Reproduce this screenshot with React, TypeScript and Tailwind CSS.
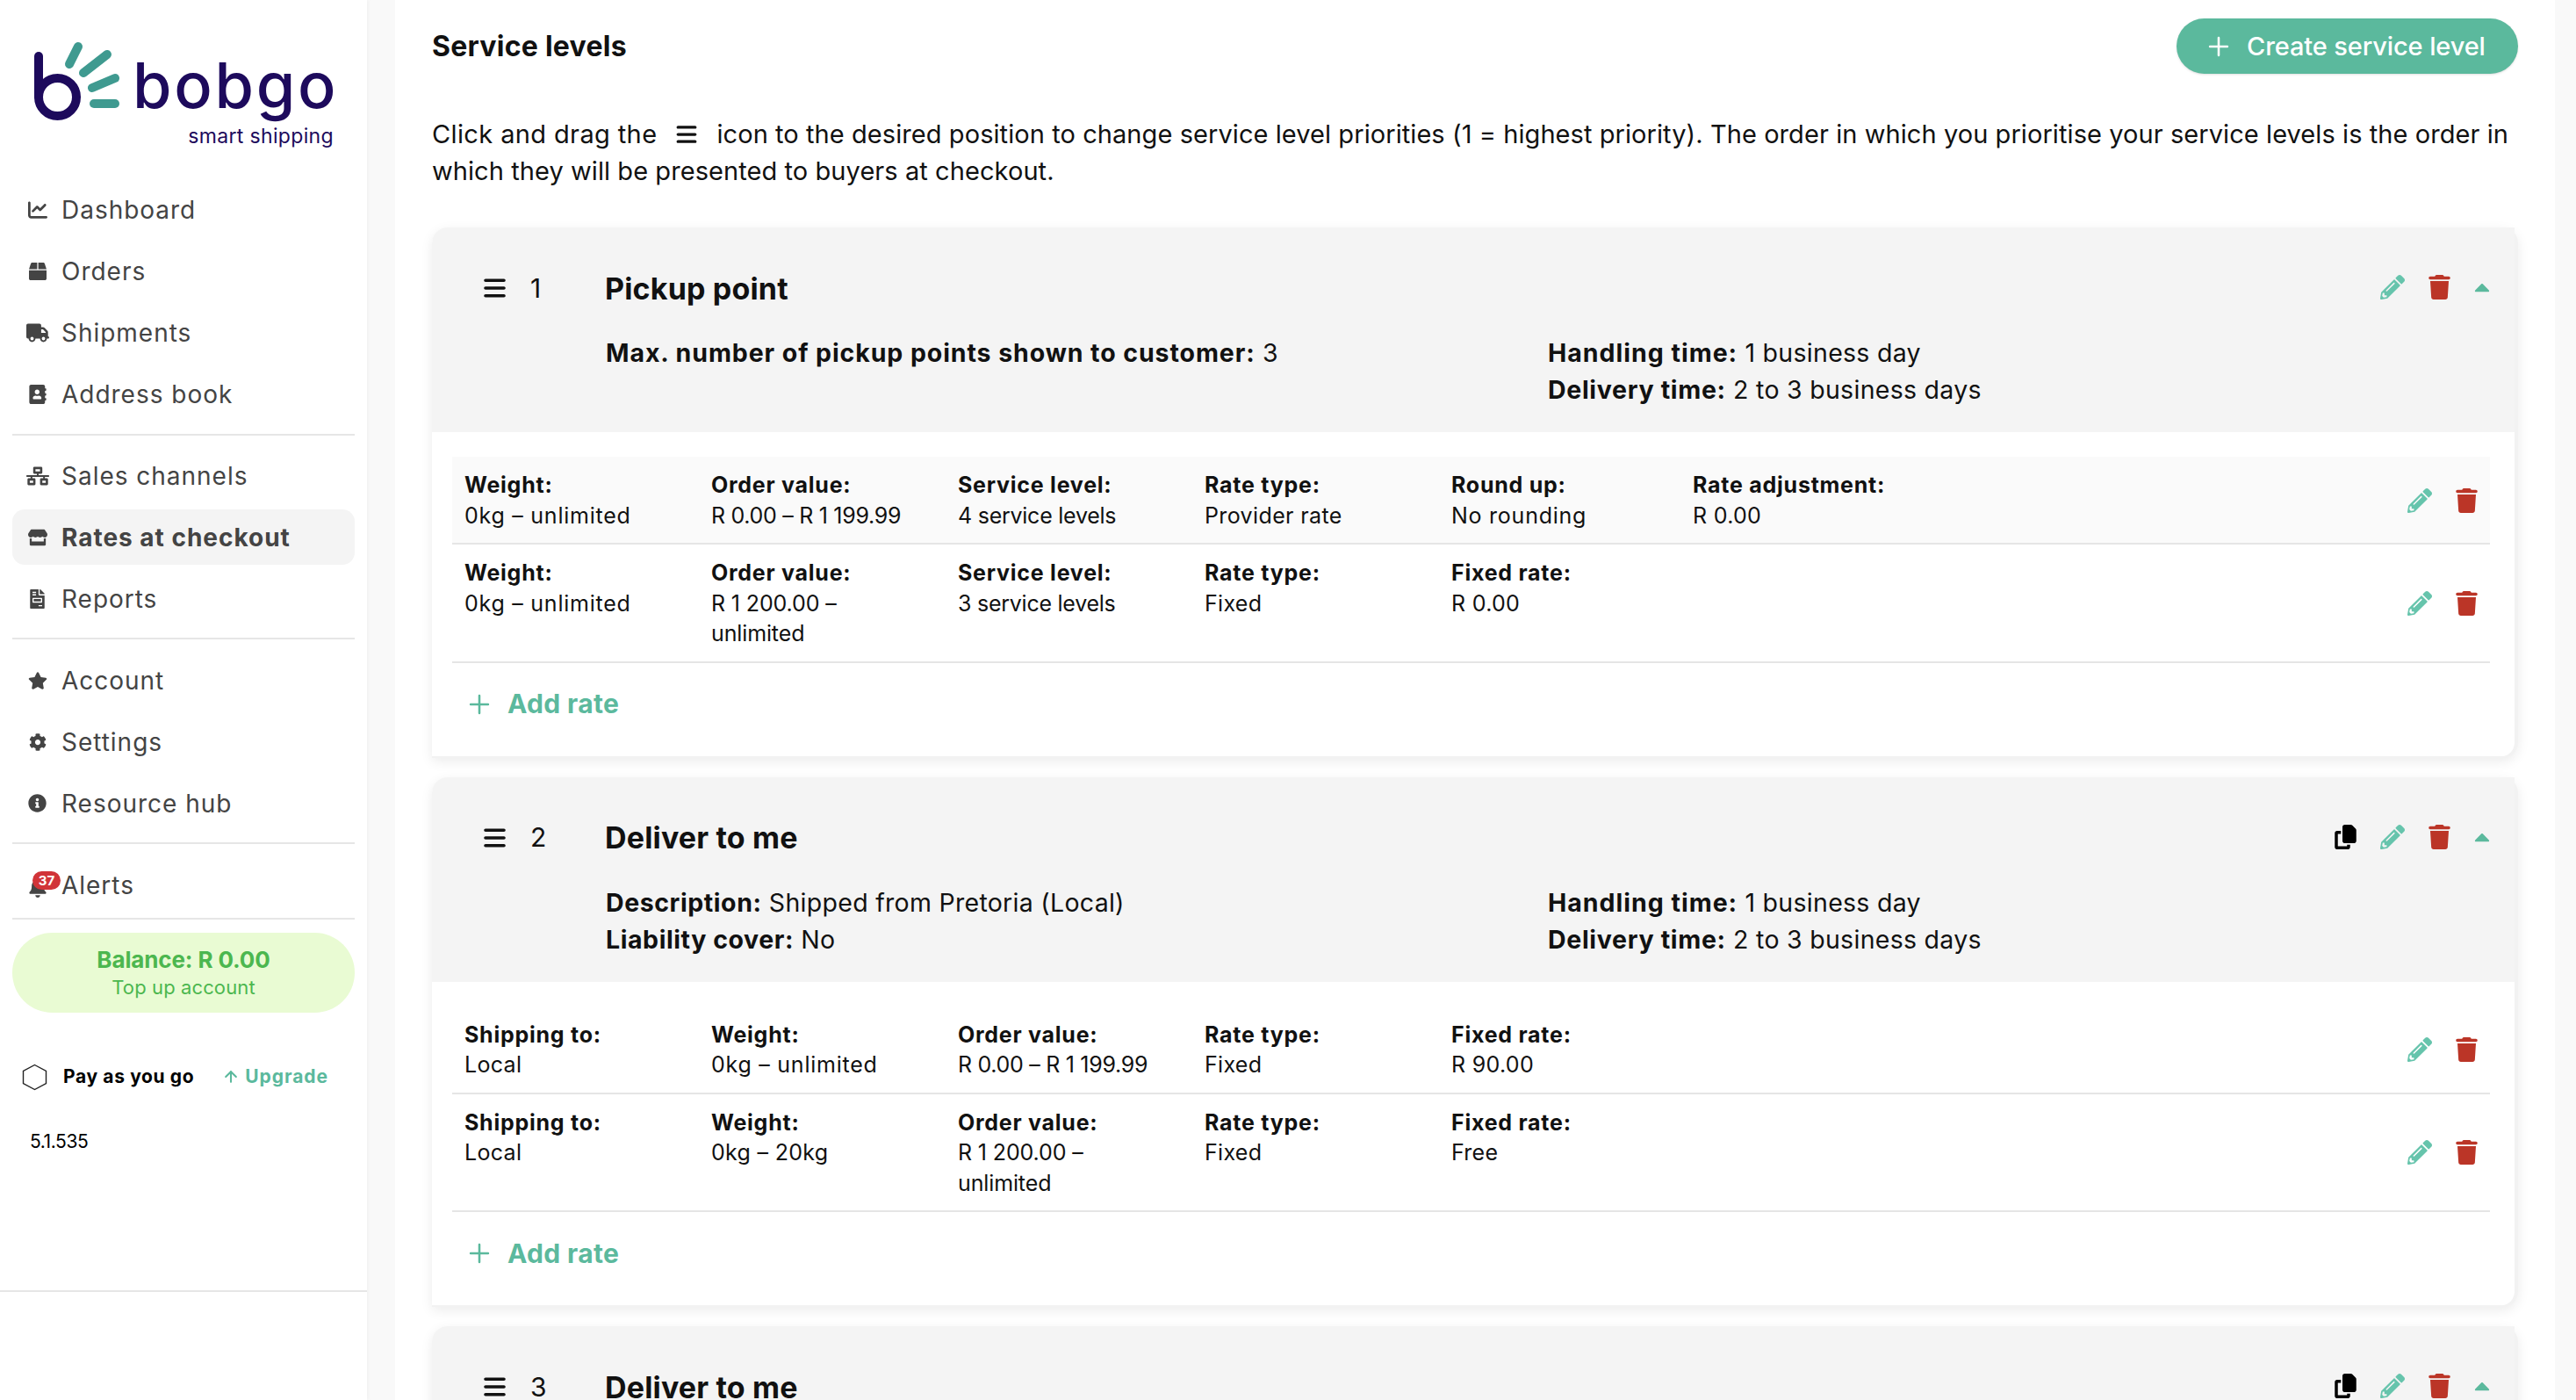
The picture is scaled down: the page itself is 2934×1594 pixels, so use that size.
import React from 'react';
import { ArrowUp, Plus } from 'lucide-react';
import {
  FaAddressBook,
  FaBell,
  FaBox,
  FaCaretUp,
  FaCog,
  FaFileInvoice,
  FaInfoCircle,
  FaNetworkWired,
  FaPencilAlt,
  FaStar,
  FaStore,
} from 'react-icons/fa';
import { FaBars, FaChartLine, FaCopy, FaTrash, FaTruck } from 'react-icons/fa6';

const FONT = "font-['Inter','Noto_Sans',sans-serif]";

type NavEntry = { label: string; icon: React.ReactNode; active?: boolean };

const NAV_GROUPS: NavEntry[][] = [
  [
    { label: 'Dashboard', icon: <FaChartLine className="w-[22px] h-[22px]" /> },
    { label: 'Orders', icon: <FaBox className="w-[20px] h-[20px]" /> },
    { label: 'Shipments', icon: <FaTruck className="w-[26px] h-[22px]" /> },
    { label: 'Address book', icon: <FaAddressBook className="w-[20px] h-[22px]" /> },
  ],
  [
    { label: 'Sales channels', icon: <FaNetworkWired className="w-[26px] h-[22px]" /> },
    { label: 'Rates at checkout', icon: <FaStore className="w-[22px] h-[20px]" />, active: true },
    { label: 'Reports', icon: <FaFileInvoice className="w-[17px] h-[22px]" /> },
  ],
  [
    { label: 'Account', icon: <FaStar className="w-[22px] h-[20px]" /> },
    { label: 'Settings', icon: <FaCog className="w-[20px] h-[20px]" /> },
    { label: 'Resource hub', icon: <FaInfoCircle className="w-[21px] h-[21px]" /> },
  ],
];

const NavItem = ({ entry }: { entry: NavEntry }) => (
  <div
    className={`h-[63px] mb-[7px] last:mb-0 flex items-center rounded-[14px] text-[#444] ${
      entry.active ? 'bg-[#f4f4f4] font-bold' : ''
    }`}
  >
    <div className="w-[56px] flex justify-center pl-[1px]">{entry.icon}</div>
    <span className="text-[28px] tracking-[0.035em]">{entry.label}</span>
  </div>
);

const Logo = () => (
  <div className="relative h-[125px] ml-[25px] w-[355px]">
    <svg className="absolute left-0 top-0" width="112" height="125" viewBox="0 0 112 125" fill="none">
      <g stroke="#1d0a5c" strokeWidth="10" strokeLinecap="round">
        <path d="M19 20 V66" />
        <circle cx="40.5" cy="66.5" r="21.5" />
      </g>
      <g stroke="#3f9a90" strokeWidth="10" strokeLinecap="round">
        <path d="M54 29 L64 9" />
        <path d="M70 39 L97 18" />
        <path d="M80 56 L106 45" />
        <path d="M82 74 L106 74" />
      </g>
    </svg>
    <span className="absolute left-[126px] top-[3px] text-[72px] leading-[100px] font-medium text-[#1d0a5c] tracking-[0.038em]">
      bobgo
    </span>
    <span className="absolute right-0 top-[94px] text-[23px] leading-[34px] text-[#1d0a5c] tracking-[0.015em]">
      smart shipping
    </span>
  </div>
);

const Sidebar = () => (
  <aside className="w-[418px] shrink-0 h-full bg-white shadow-[2px_0_4px_rgba(0,0,0,0.03)] flex flex-col">
    <div className="pt-[44px] pb-[38px]">
      <Logo />
    </div>
    <div className="px-[14px]">
      {NAV_GROUPS.map((group, i) => (
        <div key={i} className={`border-b-2 border-[#e6e6e6] ${i === 0 ? 'pb-[14px]' : 'pb-[13px]'} ${i === 1 ? 'pt-[14px]' : i === 2 ? 'pt-[15px]' : ''}`}>
          {group.map(entry => (
            <NavItem key={entry.label} entry={entry} />
          ))}
        </div>
      ))}
      <div className="border-b-2 border-[#e6e6e6] pt-[15px] pb-[6px]">
        <div className="h-[63px] flex items-center text-[#444]">
          <div className="relative w-[56px] flex justify-center pl-[1px]">
            <FaBell className="w-[20px] h-[22px] mt-[6px]" />
            <span className="absolute left-[23px] top-[-2px] w-[32px] h-[21px] rounded-full bg-[#d13438] text-white text-[15px] leading-[21px] font-bold text-center">
              37
            </span>
          </div>
          <span className="text-[28px] tracking-[0.035em]">Alerts</span>
        </div>
      </div>
      <div className="mt-[15px] h-[91px] rounded-[46px] bg-[#e9fbd3] flex flex-col items-center justify-center text-[#4cb74f]">
        <span className="text-[26px] leading-[32px] font-bold tracking-[-0.005em]">Balance: R 0.00</span>
        <span className="text-[22px] leading-[30px] tracking-[0.005em]">Top up account</span>
      </div>
      <div className="mt-[57px] flex items-center h-[32px]">
        <svg className="ml-[11px]" width="29" height="31" viewBox="0 0 29 31" fill="none" stroke="#222" strokeWidth="1.4">
          <path d="M14.5 1.5 L27.5 8.5 V22.5 L14.5 29.5 L1.5 22.5 V8.5 Z" />
        </svg>
        <span className="ml-[18px] text-[21px] font-bold text-black tracking-[0.03em]">Pay as you go</span>
        <ArrowUp className="ml-[32px] w-[20px] h-[20px] text-[#5bb99d]" strokeWidth={2.5} />
        <span className="ml-[6px] text-[21px] font-bold text-[#5bb99d] tracking-[0.045em]">Upgrade</span>
      </div>
      <div className="mt-[42px] ml-[20px] text-[21px] leading-[32px] text-black tracking-[-0.02em]">5.1.535</div>
    </div>
    <div className="mt-[153px] border-b-2 border-[#e6e6e6]" />
  </aside>
);

const Pencil = () => <FaPencilAlt className="w-[28px] h-[28px] text-[#66c4ac]" />;
const Trash = () => <FaTrash className="w-[25px] h-[28px] text-[#bb3527]" />;

type Cell = { label: string; value: string; width?: string; vt?: string };

const Row = ({ cells, shaded }: { cells: Cell[]; shaded?: boolean }) => (
  <div
    className={`flex items-center border-b-2 border-[#e5e5e5] pl-[14px] pr-[14px] pt-[15px] pb-[14px] ${
      shaded ? 'bg-[#fafafa]' : ''
    }`}
  >
    <div className="flex-1 flex items-start">
      {cells.map(cell => (
        <div key={cell.label} className={`${cell.width ?? 'w-[281px]'} shrink-0 pr-[30px] text-[25px] leading-[34.5px] text-[#111]`}>
          <div className="font-bold tracking-[0.03em]">{cell.label}</div>
          <div className={cell.vt ?? 'tracking-[0.012em]'}>{cell.value}</div>
        </div>
      ))}
    </div>
    <div className="flex items-center gap-[27px]">
      <Pencil />
      <Trash />
    </div>
  </div>
);

const AddRate = () => (
  <div className="h-[94px] pl-[14px] flex items-center gap-[15px] text-[#5bb99d]">
    <Plus className="w-[34px] h-[34px]" strokeWidth={1.8} />
    <span className="text-[30px] font-bold tracking-[0.012em]">Add rate</span>
  </div>
);

type CardProps = {
  index: number;
  title: string;
  left: React.ReactNode;
  right?: React.ReactNode;
  copy?: boolean;
  children?: React.ReactNode;
};

const Card = ({ index, title, left, right, copy, children }: CardProps) => (
  <section className="rounded-[18px] rounded-bl-none bg-white border-r-[4px] border-b-2 border-[#f2f2f2] shadow-[0_4px_14px_rgba(0,0,0,0.08)] mb-[22px]">
    <div className="h-[233px] rounded-tl-[18px] bg-[#f4f4f4] pl-[59px] pr-[23px] pt-[44px]">
      <div className="flex items-center h-[50px]">
        <FaBars className="w-[25px] h-[28px] text-[#111]" />
        <span className="ml-[28px] w-[85px] text-[30px] text-[#111]">{index}</span>
        <span className="text-[34px] font-bold text-[#111] tracking-[0.005em]">{title}</span>
        <div className="ml-auto flex items-center -mt-[2px]">
          {copy && <FaCopy className="w-[25px] h-[28px] text-black mr-[27px]" />}
          <Pencil />
          <div className="ml-[27px]">
            <Trash />
          </div>
          <FaCaretUp className="ml-[22px] w-[28px] h-[28px] text-[#5bb99d]" />
        </div>
      </div>
      <div className="mt-[28px] ml-[139px] flex text-[28.5px] leading-[42px] text-[#111] tracking-[0.01em]">
        <div className="w-[1073px]">{left}</div>
        <div>{right}</div>
      </div>
    </div>
    <div className="pl-[23px] pr-[28px] pt-[28px] pb-[12px]">{children}</div>
  </section>
);

const Pair = ({ k, v, kt }: { k: string; v: string; kt?: string }) => (
  <div>
    <span className={`font-bold ${kt ?? 'tracking-[0.02em]'}`}>{k}</span> {v}
  </div>
);

const Timing = () => (
  <>
    <Pair k="Handling time:" v="1 business day" kt="tracking-[0.035em]" />
    <Pair k="Delivery time:" v="2 to 3 business days" kt="tracking-[0.024em]" />
  </>
);

const App: React.FC = () => (
  <div className={`h-screen w-full overflow-hidden bg-[#f9f9f9] flex ${FONT}`}>
    <Sidebar />
    <main className="ml-[32px] w-[2460px] h-full overflow-hidden bg-white px-[42px] pt-[21px]">
      <div className="flex items-center justify-between h-[63px]">
        <h1 className="text-[32px] font-bold text-[#111] tracking-[0.008em]">Service levels</h1>
        <button className="h-[63px] w-[389px] rounded-full bg-[#5bb99d] text-white shadow-sm flex items-center pl-[31px]">
          <Plus className="w-[34px] h-[34px]" strokeWidth={1.8} />
          <span className="ml-[15px] text-[29px] font-medium tracking-[-0.004em]">Create service level</span>
        </button>
      </div>
      <p className="mt-[48px] text-[29px] leading-[42px] text-[#111] tracking-[0.0025em]">
        <span className="tracking-[0.013em]">Click and drag the</span>
        <FaBars className="inline-block mx-[21px] w-[26px] h-[26px] align-[-3px]" />
        icon to the desired position to change service level priorities (1 = highest priority). The order in which you prioritise your service levels is the order in which they will be presented to buyers at checkout.
      </p>
      <div className="mt-[43px]">
        <Card
          index={1}
          title="Pickup point"
          left={<Pair k="Max. number of pickup points shown to customer:" v="3" kt="tracking-[0.032em]" />}
          right={<Timing />}
        >
          <Row
            shaded
            cells={[
              { label: 'Weight:', value: '0kg – unlimited', vt: 'tracking-[0.03em]' },
              { label: 'Order value:', value: 'R 0.00 – R 1 199.99', vt: 'tracking-[-0.012em]' },
              { label: 'Service level:', value: '4 service levels', vt: 'tracking-[-0.01em]' },
              { label: 'Rate type:', value: 'Provider rate', vt: 'tracking-[0.015em]' },
              { label: 'Round up:', value: 'No rounding', width: 'w-[275px]', vt: 'tracking-[0.03em]' },
              { label: 'Rate adjustment:', value: 'R 0.00' },
            ]}
          />
          <Row
            cells={[
              { label: 'Weight:', value: '0kg – unlimited', vt: 'tracking-[0.03em]' },
              { label: 'Order value:', value: 'R 1 200.00 – unlimited', vt: 'tracking-[-0.005em]' },
              { label: 'Service level:', value: '3 service levels', vt: 'tracking-[-0.01em]' },
              { label: 'Rate type:', value: 'Fixed' },
              { label: 'Fixed rate:', value: 'R 0.00' },
            ]}
          />
          <AddRate />
        </Card>
        <Card
          index={2}
          title="Deliver to me"
          copy
          left={
            <>
              <Pair k="Description:" v="Shipped from Pretoria (Local)" />
              <Pair k="Liability cover:" v="No" />
            </>
          }
          right={<Timing />}
        >
          <Row
            cells={[
              { label: 'Shipping to:', value: 'Local' },
              { label: 'Weight:', value: '0kg – unlimited', vt: 'tracking-[0.03em]' },
              { label: 'Order value:', value: 'R 0.00 – R 1 199.99', vt: 'tracking-[-0.012em]' },
              { label: 'Rate type:', value: 'Fixed' },
              { label: 'Fixed rate:', value: 'R 90.00' },
            ]}
          />
          <Row
            cells={[
              { label: 'Shipping to:', value: 'Local' },
              { label: 'Weight:', value: '0kg – 20kg' },
              { label: 'Order value:', value: 'R 1 200.00 – unlimited', vt: 'tracking-[-0.005em]' },
              { label: 'Rate type:', value: 'Fixed' },
              { label: 'Fixed rate:', value: 'Free' },
            ]}
          />
          <AddRate />
        </Card>
        <Card index={3} title="Deliver to me" copy left={null} />
      </div>
    </main>
  </div>
);

export default App;
